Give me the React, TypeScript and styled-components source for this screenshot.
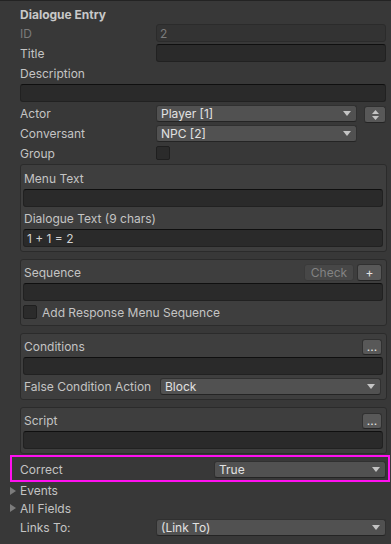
import React from "react";
import styled, { createGlobalStyle } from "styled-components";

const GlobalStyle = createGlobalStyle`
  html, body { margin: 0; padding: 0; background: #383838; }
  * { box-sizing: border-box; }
`;

const Inspector = styled.div`
  width: 391px;
  height: 544px;
  background: #383838;
  border-top: 1px solid #232323;
  padding: 3px 0 0 0;
  font-family: Inter, "Noto Sans", sans-serif;
  font-size: 12px;
  color: #c4c4c4;
  display: flex;
  flex-direction: column;
  overflow: hidden;
`;

const Header = styled.div`
  height: 20px;
  margin-left: 20px;
  display: flex;
  align-items: center;
  font-weight: 700;
  color: #c8c8c8;
`;

const Row = styled.div<{ $mt?: number; $h?: number; $indent?: number; $mr?: number }>`
  display: flex;
  align-items: center;
  height: ${(p) => p.$h ?? 18}px;
  margin-top: ${(p) => p.$mt ?? 2}px;
  margin-left: ${(p) => p.$indent ?? 20}px;
  margin-right: ${(p) => p.$mr ?? 5}px;
`;

const Label = styled.div<{ $w?: number; $disabled?: boolean }>`
  width: ${(p) => (p.$w ? `${p.$w}px` : "auto")};
  flex: ${(p) => (p.$w ? "none" : "1")};
  white-space: nowrap;
  color: ${(p) => (p.$disabled ? "#7b7b7b" : "#c4c4c4")};
`;

const TextField = styled.div<{ $disabled?: boolean; $h?: number }>`
  flex: 1;
  height: ${(p) => p.$h ?? 18}px;
  border-radius: 3px;
  background: ${(p) => (p.$disabled ? "#333333" : "#2a2a2a")};
  border: 1px solid ${(p) => (p.$disabled ? "#2b2b2b" : "#212121")};
  border-top-color: ${(p) => (p.$disabled ? "#2b2b2b" : "#0f0f0f")};
  color: ${(p) => (p.$disabled ? "#7b7b7b" : "#d2d2d2")};
  padding: 0 3px;
  display: flex;
  align-items: center;
  white-space: nowrap;
`;

const Dropdown = styled.div<{ $w?: number; $bottom?: boolean }>`
  ${(p) => (p.$w ? `width: ${p.$w}px; flex: none;` : "flex: 1;")}
  ${(p) => (p.$bottom ? "align-self: flex-end;" : "")}
  height: 17px;
  border-radius: 3px;
  background: #515151;
  border: 1px solid #303030;
  border-bottom-color: #242424;
  color: #e2e2e2;
  padding: 0 5px 0 4px;
  display: flex;
  align-items: center;
  justify-content: space-between;
  white-space: nowrap;
`;

const Arrow = () => (
  <svg width="8" height="5" viewBox="0 0 8 5">
    <path d="M0 0 H8 L4 5 Z" fill="#c4c4c4" />
  </svg>
);

const SmallButton = styled.div<{ $w: number; $h?: number; $disabled?: boolean }>`
  width: ${(p) => p.$w}px;
  height: ${(p) => p.$h ?? 17}px;
  flex: none;
  border-radius: 3px;
  background: ${(p) => (p.$disabled ? "#474747" : "#585858")};
  border: 1px solid ${(p) => (p.$disabled ? "#3a3a3a" : "#303030")};
  border-bottom-color: ${(p) => (p.$disabled ? "#3a3a3a" : "#242424")};
  color: ${(p) => (p.$disabled ? "#838383" : "#e4e4e4")};
  display: flex;
  align-items: center;
  justify-content: center;
  line-height: 1;
`;

const Checkbox = styled.div`
  width: 14px;
  height: 14px;
  flex: none;
  border-radius: 2px;
  background: #2b2b2b;
  border: 1px solid #1f1f1f;
`;

const Box = styled.div<{ $mt?: number }>`
  margin: ${(p) => p.$mt ?? 7}px 4px 0 20px;
  background: #3e3e3e;
  border: 1px solid #2b2b2b;
  border-radius: 3px;
  padding: 4px 3px 4px 2px;
  display: flex;
  flex-direction: column;
`;

const BoxRow = styled.div<{ $mt?: number; $h?: number }>`
  display: flex;
  align-items: center;
  height: ${(p) => p.$h ?? 18}px;
  margin-top: ${(p) => p.$mt ?? 2}px;
  gap: 3px;
`;

const BoxLabel = styled.div<{ $w?: number }>`
  ${(p) => (p.$w ? `width: ${p.$w}px; flex: none;` : "flex: 1;")}
  padding-left: 1px;
  white-space: nowrap;
`;

const Highlight = styled.div`
  margin: 1px 1px 0 10px;
  border: 2px solid #ff10f0;
  padding: 4px 2px 2px 8px;
  display: flex;
  align-items: center;
  height: 27px;
`;

const Foldout = styled.div<{ $mt?: number; $h?: number }>`
  display: flex;
  align-items: center;
  height: ${(p) => p.$h ?? 18}px;
  margin-top: ${(p) => p.$mt ?? 0}px;
  margin-left: 10px;
  gap: 4px;
`;

const FoldArrow = () => (
  <svg width="6" height="8" viewBox="0 0 6 8">
    <path d="M0 0 L6 4 L0 8 Z" fill="#7c7c7c" />
  </svg>
);

const UpDown = () => (
  <svg width="7" height="10" viewBox="0 0 7 10">
    <path d="M3.5 0 L7 4 H0 Z" fill="#c4c4c4" />
    <path d="M0 6 H7 L3.5 10 Z" fill="#c4c4c4" />
  </svg>
);

export default function App() {
  return (
    <>
      <GlobalStyle />
      <Inspector>
        <Header>Dialogue Entry</Header>
        <Row $mt={0}>
          <Label $w={136} $disabled>ID</Label>
          <TextField $disabled>2</TextField>
        </Row>
        <Row>
          <Label $w={136}>Title</Label>
          <TextField />
        </Row>
        <Row>
          <Label>Description</Label>
        </Row>
        <Row>
          <TextField />
        </Row>
        <Row>
          <Label $w={136}>Actor</Label>
          <Dropdown $bottom>
            <span>Player [1]</span>
            <Arrow />
          </Dropdown>
          <SmallButton $w={22} style={{ marginLeft: 7, alignSelf: "flex-end", marginBottom: -1 }}>
            <UpDown />
          </SmallButton>
        </Row>
        <Row>
          <Label $w={136}>Conversant</Label>
          <Dropdown $w={201} $bottom>
            <span>NPC [2]</span>
            <Arrow />
          </Dropdown>
        </Row>
        <Row>
          <Label $w={136}>Group</Label>
          <Checkbox />
        </Row>

        <Box $mt={2}>
          <BoxRow $mt={0}>
            <BoxLabel>Menu Text</BoxLabel>
          </BoxRow>
          <BoxRow>
            <TextField />
          </BoxRow>
          <BoxRow>
            <BoxLabel>Dialogue Text (9 chars)</BoxLabel>
          </BoxRow>
          <BoxRow>
            <TextField>1 + 1 = 2</TextField>
          </BoxRow>
        </Box>

        <Box>
          <BoxRow $mt={0} $h={17}>
            <BoxLabel>Sequence</BoxLabel>
            <SmallButton $w={50} $disabled>Check</SmallButton>
            <SmallButton $w={25} style={{ marginRight: 1 }}>+</SmallButton>
          </BoxRow>
          <BoxRow>
            <TextField />
          </BoxRow>
          <BoxRow style={{ gap: 4 }}>
            <Checkbox />
            <BoxLabel>Add Response Menu Sequence</BoxLabel>
          </BoxRow>
        </Box>

        <Box>
          <BoxRow $mt={0} $h={17}>
            <BoxLabel>Conditions</BoxLabel>
            <SmallButton $w={20} $h={16} style={{ marginRight: 1 }}>...</SmallButton>
          </BoxRow>
          <BoxRow>
            <TextField />
          </BoxRow>
          <BoxRow>
            <BoxLabel $w={134}>False Condition Action</BoxLabel>
            <Dropdown $bottom style={{ marginRight: 2 }}>
              <span>Block</span>
              <Arrow />
            </Dropdown>
          </BoxRow>
        </Box>

        <Box>
          <BoxRow $mt={0} $h={17}>
            <BoxLabel>Script</BoxLabel>
            <SmallButton $w={20} $h={16} style={{ marginRight: 1 }}>...</SmallButton>
          </BoxRow>
          <BoxRow>
            <TextField />
          </BoxRow>
        </Box>

        <Highlight>
          <Label $w={194}>Correct</Label>
          <Dropdown>
            <span>True</span>
            <Arrow />
          </Dropdown>
        </Highlight>

        <Foldout $h={17}>
          <FoldArrow />
          <span>Events</span>
        </Foldout>
        <Foldout>
          <FoldArrow />
          <span>All Fields</span>
        </Foldout>
        <Row $mt={1}>
          <Label $w={136}>Links To:</Label>
          <Dropdown $bottom>
            <span>(Link To)</span>
            <Arrow />
          </Dropdown>
        </Row>
      </Inspector>
    </>
  );
}
